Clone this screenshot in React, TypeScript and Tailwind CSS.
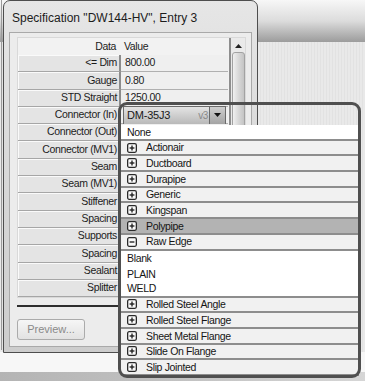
import React from "react";

const font = { fontFamily: '"Liberation Sans", Arial, sans-serif' };

const rows = [
  "<= Dim",
  "Gauge",
  "STD Straight",
  "Connector (In)",
  "Connector (Out)",
  "Connector (MV1)",
  "Seam",
  "Seam (MV1)",
  "Stiffener",
  "Spacing",
  "Supports",
  "Spacing",
  "Sealant",
  "Splitter",
];

const values: Record<number, string> = { 0: "800.00", 1: "0.80", 2: "1250.00" };

type Item = { label: string; kind: "plain" | "plus" | "minus"; active?: boolean };

const items: Item[] = [
  { label: "None", kind: "plain" },
  { label: "Actionair", kind: "plus" },
  { label: "Ductboard", kind: "plus" },
  { label: "Durapipe", kind: "plus" },
  { label: "Generic", kind: "plus" },
  { label: "Kingspan", kind: "plus" },
  { label: "Polypipe", kind: "plus", active: true },
  { label: "Raw Edge", kind: "minus" },
  { label: "Blank", kind: "plain" },
  { label: "PLAIN", kind: "plain" },
  { label: "WELD", kind: "plain" },
  { label: "Rolled Steel Angle", kind: "plus" },
  { label: "Rolled Steel Flange", kind: "plus" },
  { label: "Sheet Metal Flange", kind: "plus" },
  { label: "Slide On Flange", kind: "plus" },
  { label: "Slip Jointed", kind: "plus" },
];

function TreeBox({ minus }: { minus?: boolean }) {
  return (
    <svg width="10" height="10" viewBox="0 0 10 10" className="shrink-0">
      <rect x="0.65" y="0.65" width="8.7" height="8.7" rx="1.5" fill="#fafafa" stroke="#2a2a2a" strokeWidth="1.3" />
      <path d="M2.6 5h4.8" stroke="#1a1a1a" strokeWidth="1.3" />
      {!minus && <path d="M5 2.6v4.8" stroke="#1a1a1a" strokeWidth="1.3" />}
    </svg>
  );
}

function Combo() {
  return (
    <div className="flex h-[19px] w-[103px] border border-[#6a6a6a]">
      <div className="flex flex-1 items-center justify-between bg-gradient-to-b from-[#e4e4e4] to-[#b9b9b9] pl-[3px] pr-[1px]">
        <span className="text-[11px] tracking-[-0.2px] text-[#1a1a1a]">DM-35J3</span>
        <span className="text-[10px] text-[#8a8a8a]">v3</span>
      </div>
      <div className="flex w-[16px] items-center justify-center border-l border-[#6a6a6a] bg-gradient-to-b from-[#cfcfcf] to-[#a4a4a4]">
        <svg width="7" height="4" viewBox="0 0 7 4">
          <path d="M0 0h7L3.5 4z" fill="#111" />
        </svg>
      </div>
    </div>
  );
}

function DropList() {
  return (
    <div className="absolute left-[121px] top-[125px] flex h-[251px] w-[238px] flex-col bg-white">
      {items.map((it, i) => {
        const group = it.kind !== "plain";
        const next = items[i + 1];
        const line = group || i === 0 || (next && next.kind !== "plain");
        return (
          <div
            key={i}
            className={
              "flex h-[15.7px] items-center gap-[9px] pl-[6px] text-[10.5px] leading-none tracking-[-0.35px] text-[#151515] " +
              (it.active ? "bg-[#b3b3b3] " : group ? "bg-[#f1f1f1] " : "bg-white ") +
              (line ? "border-b-2 border-[#8d8d8d]" : "")
            }
          >
            {group ? <TreeBox minus={it.kind === "minus"} /> : null}
            <span>{it.label}</span>
          </div>
        );
      })}
    </div>
  );
}

function Dialog() {
  return (
    <div className="absolute left-[3px] top-0 flex h-[353px] w-[255px] flex-col rounded-t-[7px] border border-[#4e4e4e] bg-gradient-to-b from-[#e6e6e6] via-[#d8d8d8] to-[#cdcdcd] px-[5px] pb-[5px]">
      <div className="flex h-[31px] items-center pl-[3px] pt-[2px] text-[12px] text-[#1c1c1c]">
        Specification "DW144-HV", Entry 3
      </div>
      <div className="flex flex-1 flex-col border border-[#a9a9a9] bg-[#ececec] pl-[7px] pr-[5px] pt-[4px]">
        <div className="flex border border-[#d9d9d9] bg-[#f2f2f2]">
          <div className="flex w-[210px] flex-col">
            <div className="flex h-[17px] items-center text-[10.5px] tracking-[-0.35px] text-[#1c1c1c]">
              <div className="w-[101px] pr-[3px] text-right">Data</div>
              <div className="pl-[5px]">Value</div>
            </div>
            {rows.map((r, i) => (
              <div key={i} className="flex h-[17.3px] text-[10.5px] tracking-[-0.35px] text-[#1c1c1c]">
                <div className="flex w-[103px] items-center justify-end border-b border-r-2 border-[#a6a6a6] border-r-[#8c8c8c] bg-[#e4e4e4] pr-[2px] shadow-[inset_1px_1px_0_#fafafa]">
                  {r}
                </div>
                <div className="flex flex-1 items-center border-b border-[#b0b0b0] bg-[#efefef] pl-[2px]">
                  {i === 3 ? <Combo /> : <span className="pl-[2px]">{values[i] ?? ""}</span>}
                </div>
              </div>
            ))}
          </div>
          <div className="ml-[1px] flex w-[16px] flex-col items-center border-l-2 border-[#8e8e8e] bg-[#eaeaea] pt-[6px]">
            <svg width="7" height="4" viewBox="0 0 7 4">
              <path d="M0 4h7L3.5 0z" fill="#222" />
            </svg>
            <div className="mt-[4px] h-[150px] w-[13px] rounded-[3px] border border-[#a2a2a2] bg-gradient-to-r from-[#f0f0f0] via-[#d8d8d8] to-[#c4c4c4]" />
          </div>
        </div>
        <div className="mt-[7px] h-[2px] w-full bg-[#2e2e2e]" />
        <div className="mt-[12px]">
          <div className="flex h-[21px] w-[68px] items-center justify-center rounded-[3px] border border-[#ababab] bg-gradient-to-b from-[#f6f6f6] to-[#e2e2e2] text-[11px] text-[#8a8a8a]">
            Preview...
          </div>
        </div>
      </div>
    </div>
  );
}

export default function App() {
  return (
    <div className="relative h-[381px] w-[365px] overflow-hidden bg-[#f6f6f6]" style={font}>
      {/* window behind */}
      <div className="flex h-full w-full flex-col">
        <div className="h-[42px] bg-gradient-to-b from-[#f7f7f7] via-[#dcdcdc] to-[#9c9c9c]" />
        <div className="flex-1 bg-[repeating-linear-gradient(90deg,#e9e9e9_0px,#e9e9e9_2px,#e2e2e2_2px,#e2e2e2_3px)]" />
        <div className="h-[20px] bg-[#f7f7f7]" />
        <div className="h-[9px] bg-gradient-to-r from-[#b4b4b4] via-[#c2c2c2] to-[#d6d6d6]" />
      </div>
      <div className="absolute left-[1px] top-0 h-[350px] w-[1px] bg-[#9a9a9a]" />
      <Dialog />
      <DropList />
      <div className="pointer-events-none absolute left-[118px] top-[102px] h-[276px] w-[243px] rounded-[9px] border-[3px] border-[#4f4f4f]" />
    </div>
  );
}
